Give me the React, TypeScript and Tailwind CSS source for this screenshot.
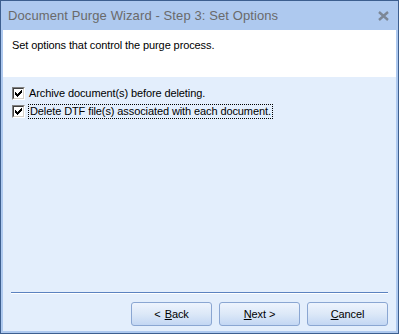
import React from 'react';

function CheckBox() {
  return (
    <span className="relative inline-block h-[13px] w-[13px] shrink-0 border border-t-[#808080] border-l-[#808080] border-r-white border-b-white bg-white">
      <span className="absolute inset-0 border border-t-[#404040] border-l-[#404040] border-r-[#d4d0c8] border-b-[#d4d0c8]" />
      <svg className="absolute left-[2px] top-[2px]" width="7" height="7" viewBox="0 0 7 7">
        <path d="M0 2h1v1h1v1h1V3h1V2h1V1h1V0h1v3h-1v1h-1v1h-1v1h-1v1H2V6H1V5H0z" fill="#000" />
      </svg>
    </span>
  );
}

function WizButton({ hot, rest, pre }: { hot: string; rest: string; pre?: string }) {
  return (
    <button
      type="button"
      className="flex h-[24px] w-[81px] items-center justify-center rounded-[3px] border border-[#8aa6d2] bg-gradient-to-b from-[#eef4fd] via-[#dce8f8] to-[#c3d7f3] text-[11px] tracking-[-0.1px] text-black"
    >
      {pre && <span className="mr-[4px]">{pre}</span>}
      <span className="underline underline-offset-1">{hot}</span>
      <span className="whitespace-pre">{rest}</span>
    </button>
  );
}

export default function App() {
  return (
    <div
      className="flex h-[334px] w-[399px] flex-col border border-[#3d5f8f] bg-[#aec9ef]"
      style={{ fontFamily: '"Liberation Sans", Arial, sans-serif' }}
    >
      <div className="flex h-[29px] items-center justify-between pl-[7px] pr-[9px]">
        <span className="text-[13px] tracking-[0.1px] text-[#6a6a6a]">Document Purge Wizard - Step 3: Set Options</span>
        <svg width="11" height="10" viewBox="0 0 11 10">
          <path d="M1 1l9 8M10 1L1 9" stroke="#7c8796" strokeWidth="2.4" />
        </svg>
      </div>
      <div className="mx-[2px] mb-[2px] flex flex-1 flex-col bg-[#e3eefc]">
        <div className="h-[47px] bg-white px-[9px] pt-[7px] text-[11px] tracking-[-0.1px] text-black">
          Set options that control the purge process.
        </div>
        <div className="flex flex-col gap-[2px] px-[9px] pt-[8px] text-[11px] tracking-[-0.1px] text-black">
          <label className="flex h-[16px] items-center gap-[4px]">
            <CheckBox />
            <span>Archive document(s) before deleting.</span>
          </label>
          <label className="flex h-[16px] items-center gap-[3px]">
            <CheckBox />
            <span className="border border-dotted border-black px-[1px] leading-[13px]">
              Delete DTF file(s) associated with each document.
            </span>
          </label>
        </div>
        <div className="flex-1" />
        <div className="mx-[8px] h-[2px] border-t border-[#5b82c0] border-b border-b-white" />
        <div className="flex justify-end gap-[7px] pb-[5px] pr-[8px] pt-[8px]">
          <WizButton pre="<" hot="B" rest="ack" />
          <WizButton hot="N" rest="ext >" />
          <WizButton hot="C" rest="ancel" />
        </div>
      </div>
    </div>
  );
}
